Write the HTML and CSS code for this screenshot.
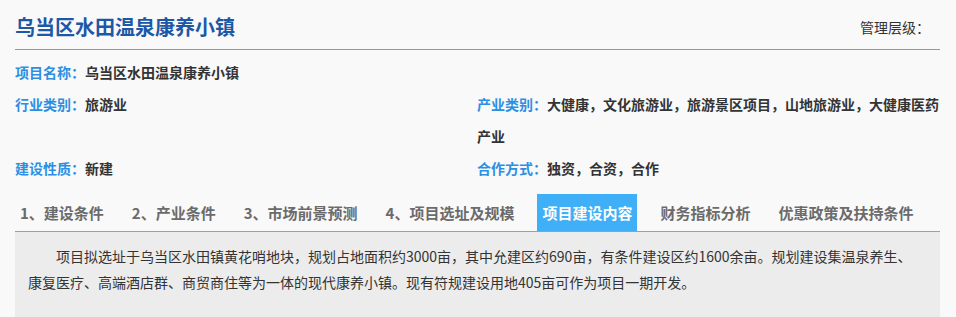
FILE: index.html
```html
<!DOCTYPE html>
<html lang="zh-CN">
<head>
<meta charset="utf-8">
<title>乌当区水田温泉康养小镇</title>
<link rel="stylesheet" href="styles.css">
</head>
<body>
<div class="page">
  <header class="head">
    <h1 class="title">乌当区水田温泉康养小镇</h1>
    <div class="level">管理层级：</div>
  </header>
  <div class="info">
    <div class="row full"><span class="lbl">项目名称：</span><span class="val">乌当区水田温泉康养小镇</span></div>
    <div class="row"><span class="lbl">行业类别：</span><span class="val">旅游业</span></div>
    <div class="row"><span class="lbl">产业类别：</span><span class="val">大健康，文化旅游业，旅游景区项目，山地旅游业，大健康医药产业</span></div>
    <div class="row"><span class="lbl">建设性质：</span><span class="val">新建</span></div>
    <div class="row"><span class="lbl">合作方式：</span><span class="val">独资，合资，合作</span></div>
  </div>
  <nav class="tabs">
    <span class="tab">1、建设条件</span>
    <span class="tab">2、产业条件</span>
    <span class="tab">3、市场前景预测</span>
    <span class="tab">4、项目选址及规模</span>
    <span class="tab active">项目建设内容</span>
    <span class="tab">财务指标分析</span>
    <span class="tab">优惠政策及扶持条件</span>
  </nav>
  <section class="content">
    <p>项目拟选址于乌当区水田镇黄花哨地块，规划占地面积约3000亩，其中允建区约690亩，有条件建设区约1600余亩。规划建设集温泉养生、康复医疗、高端酒店群、商贸商住等为一体的现代康养小镇。现有符规建设用地405亩可作为项目一期开发。</p>
  </section>
</div>
</body>
</html>
```

FILE: styles.css
```css
* { box-sizing: border-box; }
html, body { margin: 0; padding: 0; }
body {
  background: #f9f9fa;
  font-family: "Noto Sans CJK SC", "Noto Sans", sans-serif;
  color: #333;
  font-size: 14px;
}
.page {
  width: 925px;
  margin-left: 15px;
}
.head {
  display: flex;
  justify-content: space-between;
  align-items: center;
  height: 50px;
  border-bottom: 1px solid #6fa2cc;
  padding-top: 4px;
}
.title {
  margin: 0;
  font-size: 20px;
  font-weight: 700;
  color: #1c58a6;
  line-height: 28px;
}
.level {
  font-size: 14px;
  color: #333;
  margin-right: 10px;
}
.info {
  display: grid;
  grid-template-columns: 462px 463px;
  padding-top: 6px;
}
.row {
  line-height: 32px;
  font-weight: 700;
}
.row.full { grid-column: 1 / -1; }
.lbl { color: #2d8fe2; }
.val { color: #333; }
.tabs {
  display: flex;
  gap: 18px;
  margin-top: 10px;
  height: 38px;
  border-bottom: 1px solid #7aa8cf;
}
.tab {
  padding: 0 5px;
  height: 37px;
  line-height: 37px;
  font-size: 15px;
  font-weight: 700;
  color: #6b6b6b;
}
.tab.active {
  background: #3fb0f7;
  color: #fff;
}
.content {
  background: #ececec;
  padding: 11px 24px 20px 13px;
  min-height: 100px;
}
.content p {
  margin: 0;
  text-indent: 2em;
  line-height: 26px;
  font-size: 14px;
  color: #333;
}
```
